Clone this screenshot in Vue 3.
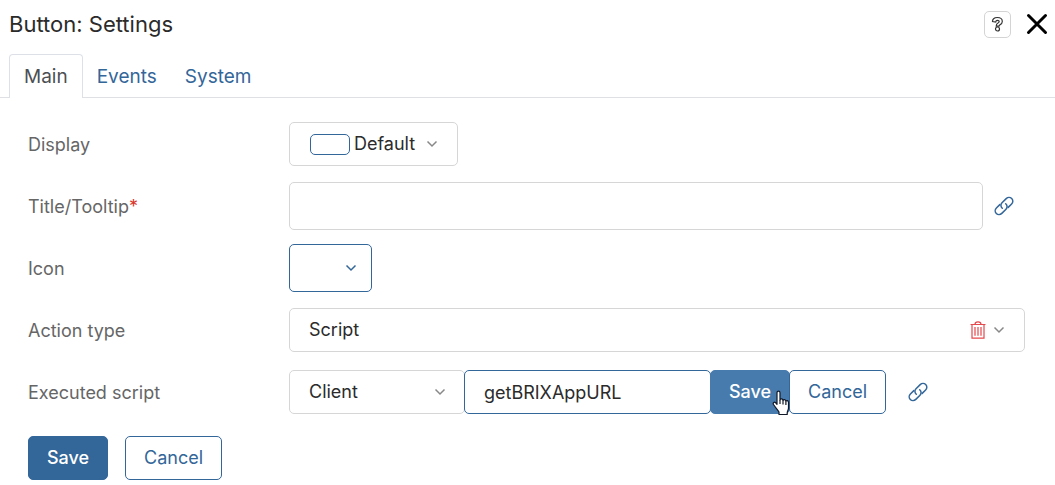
<script setup>
import { ref } from 'vue'

const tabs = ['Main', 'Events', 'System']
const activeTab = ref('Main')
const title = ref('')
const actionType = ref('Script')
const scope = ref('Client')
const scriptName = ref('getBRIXAppURL')
</script>

<template>
  <svg class="defs" aria-hidden="true">
    <symbol id="chevron" viewBox="0 0 12 8">
      <path d="M1.500 1.500 6 6l4.500-4.500" fill="none" stroke="currentColor" stroke-width="1.500" />
    </symbol>
    <symbol id="link" viewBox="0 0 22 22">
      <g fill="none" stroke="currentColor" stroke-width="1.500" stroke-linecap="round">
        <path d="M9.300 13.200C7.500 11.500 7.500 9.300 9 7.800l4.200-4.200c1.600-1.600 4-1.600 5.500-.1s1.500 3.900-.1 5.500l-3.400 3.400" />
        <path d="M12.700 8.800c1.800 1.700 1.800 3.900.3 5.400l-4.200 4.200c-1.600 1.600-4 1.600-5.500.1s-1.500-3.900.1-5.500l3.400-3.400" />
      </g>
    </symbol>
  </svg>

  <main class="dialog">
    <header class="header">
      <h1>Button: Settings</h1>
      <button class="help" type="button" aria-label="Help">
        <svg width="13" height="17" viewBox="0 0 13 17" fill="#fff" stroke="#333" stroke-width="1.200">
          <path d="M1.500 5.500C1.500 3 3.500 1.500 6.300 1.500s5 1.500 5 3.900c0 1.900-1.200 2.800-2.500 3.500-.6.400-.8.700-.8 1.300H5.200c0-1.700.5-2.500 1.800-3.200.8-.5 1.200-.8 1.200-1.400 0-.7-.6-1.200-1.700-1.200S4.800 4.900 4.700 6z" />
          <circle cx="6.500" cy="13" r="2" />
        </svg>
      </button>
      <button class="close" type="button" aria-label="Close">
        <svg width="22" height="22" viewBox="0 0 22 22" fill="none" stroke="#000" stroke-width="3" stroke-linecap="round">
          <path d="M2.500 2.500l17 17M19.500 2.500l-17 17" />
        </svg>
      </button>
    </header>

    <nav class="tabs" role="tablist">
      <button
        v-for="tab in tabs"
        :key="tab"
        type="button"
        role="tab"
        class="tab"
        :class="{ active: tab === activeTab }"
        :aria-selected="tab === activeTab"
        @click="activeTab = tab"
      >{{ tab }}</button>
    </nav>

    <form class="form" @submit.prevent>
      <div class="row">
        <label for="display">Display</label>
        <button id="display" class="box display" type="button" aria-haspopup="listbox">
          <span class="swatch"></span>
          <span class="display-text">Default</span>
          <svg class="chevron"><use href="#chevron" /></svg>
        </button>
      </div>

      <div class="row">
        <label for="title">Title/Tooltip<span class="required">*</span></label>
        <input id="title" v-model="title" class="box title-input" type="text" required />
        <button class="icon-button link" type="button" aria-label="Bind title">
          <svg width="22" height="22"><use href="#link" /></svg>
        </button>
      </div>

      <div class="row">
        <label for="icon">Icon</label>
        <button id="icon" class="box icon-picker" type="button" aria-haspopup="listbox">
          <svg class="chevron"><use href="#chevron" /></svg>
        </button>
      </div>

      <div class="row">
        <label for="action">Action type</label>
        <div class="box select action">
          <select id="action" v-model="actionType">
            <option>Script</option>
          </select>
          <button class="icon-button trash" type="button" aria-label="Clear action type">
            <svg width="16" height="18" viewBox="0 0 16 18" fill="none" stroke="currentColor" stroke-width="1.200">
              <path d="M.5 3.500h15M5 3.300C5 1.500 6 .8 8 .8s3 .7 3 2.500M2 3.500v13.700h12V3.500M5 6v8.700M8 6v8.700M11 6v8.700" />
            </svg>
          </button>
          <svg class="chevron"><use href="#chevron" /></svg>
        </div>
      </div>

      <div class="row">
        <label for="script">Executed script</label>
        <div class="group">
          <div class="box select scope">
            <select v-model="scope" aria-label="Script scope">
              <option>Client</option>
            </select>
            <svg class="chevron"><use href="#chevron" /></svg>
          </div>
          <input id="script" v-model="scriptName" class="box script-input" type="text" />
          <button class="btn primary hovered" type="button">
            Save
            <svg class="cursor" width="18" height="26" viewBox="0 0 18 26" aria-hidden="true">
              <path d="M5 2.800C5 .5 8 .5 8 2.800V10c.3-1.500 2.700-1.500 3 .5.400-1.300 2.600-1.200 2.900.7.500-1 2.600-.8 2.600 1.300V18c0 1.800-1.300 3-1.300 5v1.500H7V22c-1-2-4-5-5.500-7.500-1-1.900.8-3 2.200-1.700L5 14.300z" fill="#fff" stroke="#111827" stroke-width="1.200" stroke-linejoin="round" />
              <path d="M8 10v4M11 10.500V14.500M13.900 11.200V15" fill="none" stroke="#111827" stroke-width="1.200" />
            </svg>
          </button>
          <button class="btn outline" type="button">Cancel</button>
        </div>
        <button class="icon-button bind-script" type="button" aria-label="Bind script">
          <svg width="22" height="22"><use href="#link" /></svg>
        </button>
      </div>

      <footer class="footer">
        <button class="btn primary" type="submit">Save</button>
        <button class="btn outline" type="button">Cancel</button>
      </footer>
    </form>
  </main>
</template>

<style>
body {
  margin: 0;
  background: #fff;
}
</style>

<style scoped>
* {
  box-sizing: border-box;
}
.defs {
  position: absolute;
  width: 0;
  height: 0;
}
.dialog {
  font-family: Inter, "Liberation Sans", sans-serif;
  font-size: 18px;
  line-height: 24px;
  color: #2b2b2b;
}
button,
input,
select {
  font: inherit;
  color: inherit;
  margin: 0;
  outline: none;
}
button,
select {
  cursor: pointer;
}
svg {
  display: block;
}
.header {
  display: flex;
  align-items: center;
  height: 54px;
  padding: 0 7px 6px 9px;
}
h1 {
  flex: 1;
  margin: 0;
  font-size: 22px;
  font-weight: 400;
}
.help {
  display: grid;
  place-items: center;
  width: 27px;
  height: 27px;
  padding: 0;
  margin-right: 15px;
  background: #fff;
  border: 1px solid #d4d4d4;
  border-radius: 5px;
}
.close,
.icon-button {
  flex: none;
  padding: 0;
  background: none;
  border: 0;
}
.tabs {
  display: flex;
  height: 44px;
  padding-left: 9px;
  border-bottom: 1px solid #dee0e4;
}
.tab {
  height: 44px;
  padding: 0 14px;
  font-size: 19px;
  color: #336699;
  background: none;
  border: 1px solid transparent;
  border-bottom: 0;
  border-radius: 4px 4px 0 0;
}
.tab + .tab {
  padding: 0 13px;
}
.tab.active {
  color: #4b4f54;
  background: #fff;
  border-color: #dee0e8;
}
.form {
  padding: 15px 30px 5px 28px;
}
.row {
  display: flex;
  align-items: center;
  min-height: 62px;
}
.row > label {
  flex: none;
  width: 261px;
  padding-top: 2px;
  color: #666;
}
.required {
  color: #d9372c;
}
.box {
  height: 44px;
  background: #fff;
  border: 1px solid #d6d6d6;
  border-radius: 5px;
}
.chevron {
  flex: none;
  width: 12px;
  height: 8px;
  color: #888;
}
.display {
  display: flex;
  align-items: center;
  padding: 0 19px 0 20px;
}
.swatch {
  width: 40px;
  height: 21px;
  margin-right: 4px;
  border: 1px solid #336699;
  border-radius: 5px;
}
.display-text {
  margin-right: 11px;
}
.title-input {
  flex: 1;
  min-width: 0;
  height: 48px;
  padding: 0 20px;
}
.link {
  margin: 0 10px;
  color: #336699;
}
.icon-picker {
  display: flex;
  align-items: center;
  justify-content: flex-end;
  width: 83px;
  height: 48px;
  padding: 0 14px;
  border-color: #336699;
}
.icon-picker .chevron {
  color: #336699;
}
.select {
  display: flex;
  align-items: center;
  padding: 0 19px;
}
.select select {
  flex: 1;
  min-width: 0;
  height: 100%;
  padding: 0;
  appearance: none;
  background: none;
  border: 0;
}
.action {
  flex: 1;
}
.trash {
  margin-right: 7px;
  color: #e5484d;
}
.group {
  display: flex;
}
.scope {
  width: 176px;
  padding-right: 18px;
}
.script-input {
  width: 247px;
  padding: 0 19px;
  margin-left: -1px;
  border-color: #336699;
}
.group .btn {
  margin-left: -1px;
}
.btn {
  position: relative;
  height: 44px;
  border: 1px solid #336699;
  border-radius: 5px;
}
.primary {
  width: 80px;
  color: #fff;
  font-weight: 500;
  background: #336699;
}
.hovered {
  background: #477bae;
  border-color: #477bae;
}
.outline {
  width: 97px;
  color: #336699;
  background: #fff;
}
.cursor {
  position: absolute;
  z-index: 1;
  right: -1px;
  bottom: -3px;
}
.bind-script {
  margin-left: 21px;
  color: #336699;
}
.footer {
  display: flex;
  gap: 17px;
  margin-top: 13px;
}
</style>
